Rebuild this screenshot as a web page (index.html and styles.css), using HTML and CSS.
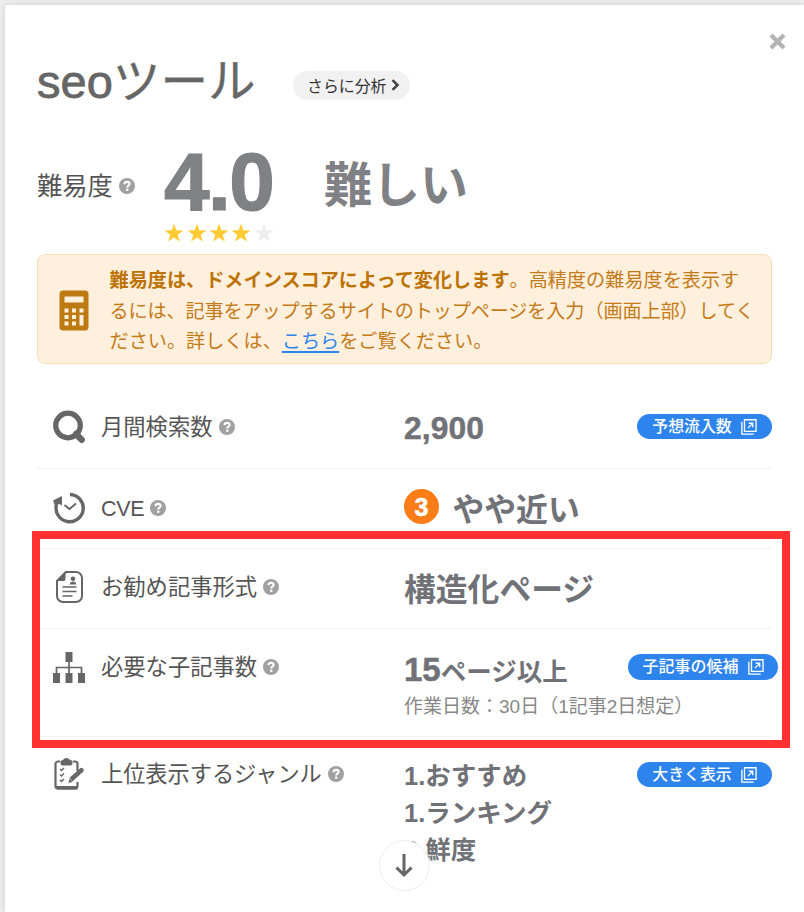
FILE: index.html
```html
<!DOCTYPE html>
<html lang="ja">
<head>
<meta charset="utf-8">
<title>seoツール</title>
<link rel="stylesheet" href="styles.css">
</head>
<body>
<svg class="sprite" aria-hidden="true">
  <symbol id="help" viewBox="0 0 16 16">
    <circle cx="8" cy="8" r="8" fill="#a0a0a0"/>
    <path d="M5.500 6.200C5.600 4.600 6.600 3.900 8.100 3.900c1.500 0 2.500.8 2.500 2 0 1.800-2.400 1.700-2.400 3.500" fill="none" stroke="#fff" stroke-width="2.100"/>
    <rect x="7.100" y="10.600" width="2.300" height="2.200" fill="#fff"/>
  </symbol>
  <symbol id="open" viewBox="0 0 17 17">
    <g fill="none" stroke="#fff" stroke-width="1.400"><path d="M3.700.8h12.300v12.300H3.700zM.9 3v13h12.600M7.300 9.700l5-5M8.200 4.500h4.200v4.200"/></g>
  </symbol>
  <symbol id="star" viewBox="0 0 20 20"><path d="M10 .5l2.300 6.700 7.200.2-5.700 4.300 2 6.900-5.800-4.100-5.800 4.100 2-6.900L.5 7.400l7.200-.2z" fill="currentColor"/></symbol>
</svg>
<main class="panel">
  <button class="close" aria-label="閉じる"><svg width="17" height="17" viewBox="0 0 17 17"><path d="M2 2l13 13M15 2L2 15" stroke="#b3b3b3" stroke-width="4.300"/></svg></button>
  <header class="head">
    <h1 class="title">seo<span>ツール</span></h1>
    <a class="more">さらに分析<svg width="9" height="12" viewBox="0 0 9 12"><path d="M1.500 1.200L6.500 6l-5 4.800" fill="none" stroke="#444" stroke-width="2.500"/></svg></a>
  </header>
  <section class="score">
    <span class="score-label">難易度</span><svg class="help"><use href="#help"/></svg>
    <div class="score-mid">
      <div class="number">4.0</div>
      <div class="stars"><svg><use href="#star"/></svg><svg><use href="#star"/></svg><svg><use href="#star"/></svg><svg><use href="#star"/></svg><svg class="off"><use href="#star"/></svg></div>
    </div>
    <strong class="level">難しい</strong>
  </section>
  <aside class="notice">
    <svg class="calc" viewBox="0 0 30 41"><rect x=".5" y=".5" width="29" height="40" rx="3.500" fill="#bd7a12"/><g fill="#fff0dd"><path d="M5.500 6.500h19v6h-19z"/><path d="M5.500 18.500h4v4h-4zM13 18.500h4v4h-4zM20.500 18.500h4v4h-4zM5.500 25h4v4h-4zM13 25h4v4h-4zM20.500 25h4v10.500h-4zM5.500 31.500h4v4h-4zM13 31.500h4v4h-4z"/></g></svg>
    <p><b>難易度は、ドメインスコアによって変化します</b>。高精度の難易度を表示す<br><span class="tight">るには、記事をアップするサイトのトップページを入力（画面上部）してく</span><br>ださい。詳しくは、<a>こちら</a>をご覧ください。</p>
  </aside>
  <section class="rows">
    <div class="row volume">
      <svg class="icon" viewBox="0 0 32 33"><circle cx="15" cy="15.500" r="12.300" fill="none" stroke="#666" stroke-width="5.200"/><path d="M23 24l5.700 5.700" stroke="#666" stroke-width="6.400" stroke-linecap="round"/></svg>
      <div class="label">月間検索数<svg class="help"><use href="#help"/></svg></div>
      <div class="value num">2,900</div>
      <a class="btn">予想流入数<svg><use href="#open"/></svg></a>
    </div>
    <div class="row cve">
      <svg class="icon" viewBox="0 0 32 32"><path d="M17 2.500A13.600 13.600 0 1 1 3.400 13" fill="none" stroke="#666" stroke-width="3.400"/><path d="M0 8.500l9-4.500v9.500l-3-1.700L2.500 15z" fill="#666"/><path d="M11.500 13l5 4 6.500-5.500" fill="none" stroke="#666" stroke-width="2"/></svg>
      <div class="label">CVE<svg class="help"><use href="#help"/></svg></div>
      <div class="value"><span class="badge">3</span>やや近い</div>
    </div>
    <div class="row format">
      <svg class="icon" viewBox="0 0 32 34"><path d="M13 2h10a6 6 0 0 1 6 6v18a6 6 0 0 1-6 6H10a6 6 0 0 1-6-6V11z" fill="none" stroke="#666" stroke-width="2"/><path d="M12.500 1v8q0 2-2 2H3z" fill="#666"/><circle cx="20" cy="8.700" r="2.300" fill="#666"/><path d="M16.700 14.500c0-4 6.600-4 6.600 0z" fill="#666"/><path d="M9.500 17h14M9.500 21.500h14M9.500 26h10" stroke="#666" stroke-width="1.500"/></svg>
      <div class="label">お勧め記事形式<svg class="help"><use href="#help"/></svg></div>
      <div class="value">構造化ページ</div>
    </div>
    <div class="row pages">
      <svg class="icon" viewBox="0 0 32 32"><path d="M12.500 0h7v10h-7zM0 21h7v10H0zM12.500 21h7v10h-7zM25 21h7v10h-7z" fill="#666"/><path d="M16 9v13M3.500 22v-6.500h25V22" fill="none" stroke="#666" stroke-width="1.700"/></svg>
      <div class="label">必要な子記事数<svg class="help"><use href="#help"/></svg></div>
      <div class="value"><div class="count"><span>15</span>ページ以上</div><div class="days">作業日数：30日（1記事2日想定）</div></div>
      <a class="btn wide">子記事の候補<svg><use href="#open"/></svg></a>
    </div>
    <div class="row genre">
      <svg class="icon" viewBox="0 0 32 32"><path d="M7 3.500H5a2.500 2.500 0 0 0-2.500 2.500v22A2.500 2.500 0 0 0 5 30.500h17a2.500 2.500 0 0 0 2.500-2.500v-4M20 3.500h2A2.500 2.500 0 0 1 24.500 6v7" fill="none" stroke="#666" stroke-width="2.200"/><path d="M2.500 28h22v3.500H4zM7.500 6V3.500Q7.500 2 10 2q1-2 3.500-2T17 2q2.500 0 2.500 1.500V6q-1 1.500-2.500 1.500h-7Q8 7.500 7.500 6z" fill="#666"/><path d="M7 11l1.500 1.500L11 10M7 16.500L8.500 18l2.500-2.500M7 22l1.500 1.500L11 21" fill="none" stroke="#666" stroke-width="1.400"/><path d="M18 21.500l8-7" stroke="#666" stroke-width="4.500"/><path d="M27 13.500l1.500-1.300" stroke="#666" stroke-width="4.500" stroke-linecap="round"/><path d="M15.500 25l1-4.500 3.300 3.300z" fill="#666"/></svg>
      <div class="label">上位表示するジャンル<svg class="help"><use href="#help"/></svg></div>
      <div class="value list"><div>1.おすすめ</div><div>1.ランキング</div><div>3.鮮度</div></div>
      <a class="btn">大きく表示<svg><use href="#open"/></svg></a>
    </div>
  </section>
</main>
<div class="highlight"></div>
<button class="scroll" aria-label="下へ"><svg width="18" height="25" viewBox="0 0 18 25"><path d="M9 1v21M1.500 14.500L9 22l7.500-7.500" fill="none" stroke="#666" stroke-width="3"/></svg></button>
</body>
</html>
```
FILE: styles.css
```css
* { box-sizing: border-box; }
html, body { margin: 0; height: 912px; overflow: hidden; }
body {
  position: relative;
  padding: 5px 0 0 5px;
  background: #f0f0f0;
  color: #555;
  font-family: "Liberation Sans", "Noto Sans CJK JP", sans-serif;
}
.sprite { position: absolute; width: 0; height: 0; }
svg { display: block; flex: none; }
button { padding: 0; border: 0; background: none; }
.panel {
  position: relative;
  height: 907px;
  padding: 46px 32px 0;
  background: #fff;
  box-shadow: 0 0 8px rgba(0, 0, 0, .16);
}
.close { position: absolute; top: 28px; right: 18px; }
.head { display: flex; align-items: center; height: 62px; }
.title {
  margin: 0;
  width: 256px;
  color: #666;
  font-size: 47px;
  font-weight: 400;
  line-height: 62px;
  white-space: nowrap;
  -webkit-text-stroke: .8px #666;
}
.title span { font-size: 47.600px; -webkit-text-stroke: .3px #666; }
.more {
  display: flex;
  align-items: center;
  gap: 5px;
  width: 117px;
  height: 29px;
  margin-top: 7px;
  padding-left: 14px;
  border-radius: 15px;
  background: #f1f1f1;
  color: #333;
  font-size: 15.900px;
  white-space: nowrap;
}
.more svg { margin-top: -2px; }
.score { display: flex; height: 141px; padding-top: 30px; }
.score-label { margin-top: 25px; font-size: 25.300px; line-height: 36px; }
.help { width: 16px; height: 16px; margin-left: 6px; }
.score > .help { margin-top: 35px; }
.score-mid { width: 160px; margin-left: 29px; }
.number {
  height: 80px;
  color: #808185;
  font-size: 82px;
  font-weight: 700;
  line-height: 77px;
  letter-spacing: -1.500px;
  -webkit-text-stroke: 1.200px #808185;
}
.stars { display: flex; gap: 2.300px; margin-left: .5px; color: #ffcb35; }
.stars svg { width: 20px; height: 20px; }
.stars .off { color: #eee; }
.level { margin-top: 8px; color: #808185; font-size: 48px; line-height: 70px; }
.notice {
  display: flex;
  width: 735px;
  height: 110px;
  padding: 11px 0 0 21px;
  border: 1px solid #f8dfba;
  border-radius: 8px;
  background: #fff0dd;
  color: #c57a18;
}
.calc { width: 30px; height: 41px; margin: 24px 20.500px 0 0; }
.notice p { margin: 0; font-size: 19.150px; line-height: 30.700px; white-space: nowrap; }
.notice .tight { letter-spacing: -.13px; }
.notice b { color: #bd7204; }
.notice a { color: #2d84ed; text-decoration: underline; text-decoration-thickness: 2px; text-underline-offset: 3px; }
.rows { width: 735px; margin-top: 25px; }
.row {
  display: grid;
  grid-template-columns: 48px 303px 224px auto;
  align-items: start;
  padding-left: 16px;
  height: 80px;
  border-bottom: 1px solid #f1f2f4;
}
.icon { width: 32px; height: 32px; margin-top: 23px; }
.label { display: flex; align-items: center; height: 32px; margin-top: 22px; padding-top: 2px; font-size: 22.300px; line-height: 30px; white-space: nowrap; }
.label .help { margin-top: -2px; }
.value { display: flex; align-items: center; height: 40px; margin-top: 18px; color: #707277; font-size: 31.800px; font-weight: 700; white-space: nowrap; }
.value.num { margin-top: 19px; letter-spacing: .1px; -webkit-text-stroke: .5px #707277; }
.badge {
  width: 35px;
  height: 35px;
  margin: -2px 13.500px 0 0;
  border-radius: 50%;
  background: #fa7d18;
  color: #fff;
  font-size: 25px;
  line-height: 37px;
  text-align: center;
  -webkit-text-stroke: .6px #fff;
}
.btn {
  display: flex;
  align-items: center;
  justify-content: center;
  gap: 9px;
  width: 135px;
  height: 25px;
  margin-left: 9px;
  border-radius: 13px;
  background: #2d84ed;
  color: #fff;
  font-size: 15.900px;
  font-weight: 500;
  line-height: 24px;
  white-space: nowrap;
}
.btn svg { width: 16px; height: 16px; }
.btn.wide { width: 150px; height: 26px; margin-left: 0; font-size: 16px; }
.volume .icon { height: 33px; margin-top: 21px; }
.volume .btn { margin-top: 25px; }
.cve .label { margin-top: 24px; padding-top: 0; font-size: 21.500px; letter-spacing: -.3px; }
.cve .label .help { margin-top: -3px; }
.format .icon { height: 34px; margin-top: 21px; }
.pages { height: 108px; }
.pages .value { display: block; height: auto; margin-top: 20px; }
.count { height: 44px; font-size: 25.500px; line-height: 42px; }
.count span { font-size: 33px; -webkit-text-stroke: .5px #707277; }
.days { color: #888; font-size: 19px; font-weight: 400; line-height: 28px; }
.pages .btn { margin-top: 25px; }
.genre { border-bottom: 0; height: 170px; }
.genre .icon, .genre .label { margin-top: 21px; }
.genre .label { font-size: 22.200px; }
.genre .list { display: block; margin-top: 21px; font-size: 25.500px; line-height: 37px; }
.genre .btn { margin-top: 25px; }
.highlight { position: absolute; left: 32px; top: 531px; width: 758px; height: 217px; border: 8px solid #ff3131; }
.scroll {
  position: absolute;
  left: 379px;
  top: 840px;
  display: flex;
  align-items: center;
  justify-content: center;
  width: 51px;
  height: 51px;
  border: 1px solid #eee;
  border-radius: 50%;
  background: #fff;
}
.scroll svg { margin-left: -2px; }
```
